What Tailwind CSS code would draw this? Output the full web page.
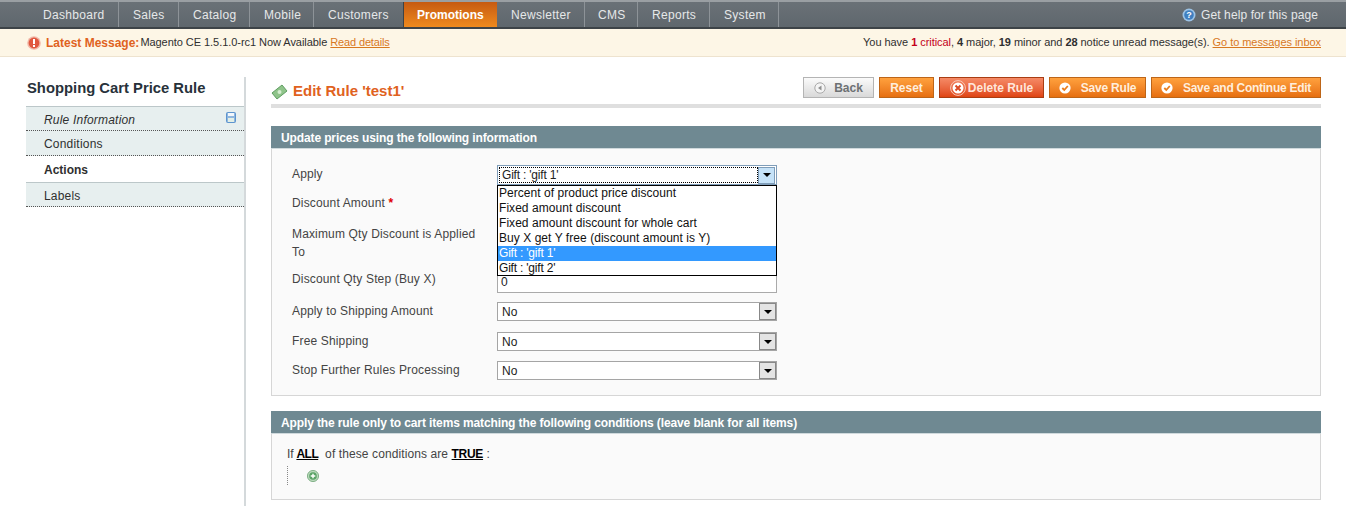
<!DOCTYPE html>
<html><head><meta charset="utf-8"><script src="https://cdn.jsdelivr.net/npm/@tailwindcss/browser@4"></script></head>
<body class="bg-white overflow-hidden">
<div class="w-[1346px] h-[506px] overflow-hidden font-['Liberation_Sans',Arial,sans-serif] text-[12px] text-[#2f2f2f]">
  <header class="h-[29px] bg-gradient-to-b from-[#6a7177] to-[#5f676d] border-t-2 border-t-[#9a9fa3] border-b-2 border-b-[#3d4347] flex items-stretch justify-between text-[12px] text-[#e6e8e9] tracking-[0.3px]">
    <nav class="flex pl-[26px]">
      <a class="w-[93px] pl-[17px] flex items-center border-r border-[#8d9398]">Dashboard</a>
      <a class="w-[60px] pl-[14px] flex items-center border-r border-[#8d9398]">Sales</a>
      <a class="w-[71px] pl-[14px] flex items-center border-r border-[#8d9398]">Catalog</a>
      <a class="w-[64px] pl-[14px] flex items-center border-r border-[#8d9398]">Mobile</a>
      <a class="w-[89px] pl-[14px] flex items-center">Customers</a>
      <a class="w-[94px] pl-[13px] flex items-center font-bold tracking-normal text-white bg-gradient-to-b from-[#c65a12] to-[#ee8a1e] border-l border-[#3d4347]">Promotions</a>
      <a class="w-[88px] pl-[14px] flex items-center border-r border-[#8d9398]">Newsletter</a>
      <a class="w-[53px] pl-[13px] flex items-center border-r border-[#8d9398]">CMS</a>
      <a class="w-[72px] pl-[14px] flex items-center border-r border-[#8d9398]">Reports</a>
      <a class="w-[69px] pl-[14px] flex items-center border-r border-[#8d9398]">System</a>
    </nav>
    <div class="flex items-center pr-[28px] gap-[5px] tracking-[0.1px]">
      <svg width="14" height="14" viewBox="0 0 14 14"><circle cx="7" cy="7" r="6.5" fill="#9cc3e6"/><circle cx="7" cy="7" r="4.8" fill="#3f7fc0"/><text x="7" y="10.2" text-anchor="middle" font-size="9" font-weight="700" fill="#fff" font-family="Liberation Sans">?</text></svg>
      <span>Get help for this page</span>
    </div>
  </header>

  <div class="h-[28px] bg-[#fdf6e6] border-b border-[#eee3cf] flex items-center justify-between pl-[27px] pr-[25px] text-[11px]">
    <div class="flex items-center">
      <svg class="mr-[5px]" width="14" height="14" viewBox="0 0 14 14"><circle cx="7" cy="7" r="6.8" fill="#f2b8a8"/><circle cx="7" cy="7" r="5.4" fill="#e0583f"/><rect x="6" y="3" width="2" height="5" fill="#fff"/><rect x="6" y="9" width="2" height="2" fill="#fff"/></svg>
      <b class="text-[#e0621e] text-[12px] mr-[1px]">Latest Message:</b>
      <span class="tracking-[-0.05px]">Magento CE 1.5.1.0-rc1 Now Available <a class="text-[#d8781f] underline tracking-[-0.15px]">Read details</a></span>
    </div>
    <div class="tracking-[-0.05px]">You have <b class="text-[#c4001a]">1</b> <span class="text-[#c4001a]">critical</span>, <b>4</b> major, <b>19</b> minor and <b>28</b> notice unread message(s). <a class="text-[#d8781f] underline">Go to messages inbox</a></div>
  </div>

  <div class="flex pl-[26px] pr-[25px] pt-[20px]">
    <aside class="w-[220px] h-[430px] shrink-0 border-r-[2px] border-[#d4d9db]">
      <h3 class="h-[29px] pl-[1px] pt-[2px] font-bold text-[14.8px] leading-[18px] text-[#27313a]">Shopping Cart Price Rule</h3>
      <ul class="text-[12px] text-[#2f2f2f] tracking-[0.2px]">
        <li class="h-[25px] pt-[3px] bg-[#e7efef] shadow-[inset_0_1px_0_#bcc7c9] border-b border-dotted border-[#555] pl-[18px] flex items-center justify-between pr-[8px] italic">
          <span>Rule Information</span>
          <svg class="mb-[5px]" width="10" height="11" viewBox="0 0 10 11"><rect x=".5" y=".5" width="9" height="10" rx="1" fill="#8fb6de" stroke="#5c94cf"/><rect x="2" y="1" width="6" height="3" fill="#f2f7fc"/><rect x="2" y="6" width="6" height="4" fill="#e3efe6"/></svg>
        </li>
        <li class="h-[25px] pt-[2px] bg-[#e7efef] border-b border-dotted border-[#555] pl-[18px] flex items-center">Conditions</li>
        <li class="h-[26px] pt-[1px] bg-white pl-[18px] flex items-center font-bold tracking-normal">Actions</li>
        <li class="h-[25px] pt-[3px] bg-[#e7efef] shadow-[inset_0_1px_0_#bcc7c9] border-b border-dotted border-[#555] pl-[18px] flex items-center">Labels</li>
      </ul>
    </aside>

    <main class="ml-[25px] w-[1050px]">
      <div class="h-[31px] border-b-[4px] border-[#dfdfdf] flex justify-between">
        <div class="flex items-center h-[27px]">
          <svg class="mr-[5px] mt-[2px]" width="17" height="16" viewBox="0 0 17 16"><path d="M1 9 L11 1 L16 7 L6 15 Z" fill="#8fc48a" stroke="#5f9d62" stroke-width="1"/><circle cx="8.5" cy="8" r="2" fill="#d5ecd0"/></svg>
          <h3 class="text-[15px] font-bold text-[#e0621e] mt-[2px]">Edit Rule 'test1'</h3>
        </div>
        <div class="flex gap-[5px] h-[22px] font-bold text-[12px] text-white whitespace-nowrap">
          <button class="w-[71px] h-[21px] border border-[#b4b4b4] bg-gradient-to-b from-[#fbfbfb] to-[#d9d9d9] text-[#6d7173] flex items-center justify-center gap-[8px]"><svg width="12" height="12" viewBox="0 0 12 12"><circle cx="6" cy="6" r="5.2" fill="#f4f4f4" stroke="#a9a9a9"/><path d="M7.5 3.5 L4 6 L7.5 8.5 Z" fill="#8f8f8f"/></svg>Back</button>
          <button class="w-[55px] h-[21px] border border-[#bd6518] bg-gradient-to-b from-[#ffa13d] to-[#e66f0f] flex items-center justify-center text-[#ffeedd]">Reset</button>
          <button class="w-[105px] h-[21px] border border-[#a93d13] bg-gradient-to-b from-[#f58a66] to-[#df4410] flex items-center justify-center gap-[2px] text-[#ffe6dc]"><svg width="16" height="16" viewBox="0 0 16 16"><circle cx="8" cy="8" r="7.4" fill="none" stroke="#f8c9b8"/><circle cx="8" cy="8" r="5.5" fill="#fff"/><path d="M5.5 5.5 L10.5 10.5 M10.5 5.5 L5.5 10.5" stroke="#db4a25" stroke-width="2"/></svg>Delete Rule</button>
          <button class="w-[97px] h-[21px] border border-[#bd6518] bg-gradient-to-b from-[#ffa13d] to-[#e66f0f] flex items-center justify-center gap-[10px] text-[#ffeedd] tracking-[-0.2px]"><svg width="12" height="12" viewBox="0 0 12 12"><circle cx="6" cy="6" r="5.6" fill="#fff"/><path d="M3.3 6 L5.3 8 L8.8 4" fill="none" stroke="#ea7d1c" stroke-width="1.8"/></svg>Save Rule</button>
          <button class="w-[170px] h-[21px] border border-[#bd6518] bg-gradient-to-b from-[#ffa13d] to-[#e66f0f] flex items-center justify-center gap-[10px] text-[#ffeedd] tracking-[-0.27px]"><svg width="12" height="12" viewBox="0 0 12 12"><circle cx="6" cy="6" r="5.6" fill="#fff"/><path d="M3.3 6 L5.3 8 L8.8 4" fill="none" stroke="#ea7d1c" stroke-width="1.8"/></svg>Save and Continue Edit</button>
        </div>
      </div>

      <section class="mt-[18px]">
        <h4 class="h-[23px] pt-[1px] bg-[#6f8992] border-b border-[#cfd9dc] pl-[10px] flex items-center font-bold text-white text-[12px] tracking-[-0.12px]">Update prices using the following information</h4>
        <div class="relative h-[247px] bg-[#fafafa] border border-t-0 border-[#d6d6d6] text-[12px] text-[#444] tracking-[0.15px]">
          <div class="grid grid-cols-[205px_280px] pl-[20px] pt-[17px]">
            <div class="h-[29px] leading-[17px]">Apply</div>
            <div></div>
            <div class="h-[30px] leading-[17px]">Discount Amount <span class="text-[#e00000] font-bold">*</span></div>
            <div></div>
            <div class="h-[46px] leading-[18px] w-[190px]">Maximum Qty Discount is Applied To</div>
            <div></div>
            <div class="h-[32px] leading-[17px]">Discount Qty Step (Buy X)</div>
            <div class="h-[19px] mt-[3px] bg-white border border-[#aaa] pl-[3px] text-[#222] leading-[15px]">0</div>
            <div class="h-[30px] leading-[17px]">Apply to Shipping Amount</div>
            <div class="h-[19px] -mt-[1px] bg-white border border-[#a5a5a5] pl-[4px] text-[#222] leading-[18px] flex justify-between">No<span class="w-[17px] h-[17px] bg-[#e4e4e4] border border-[#888] flex items-center justify-center"><span class="border-x-[4px] border-x-transparent border-t-[4px] border-t-black"></span></span></div>
            <div class="h-[29px] leading-[17px]">Free Shipping</div>
            <div class="h-[19px] bg-white -mt-[1px] border border-[#a5a5a5] pl-[4px] text-[#222] leading-[18px] flex justify-between">No<span class="w-[17px] h-[17px] bg-[#e4e4e4] border border-[#888] flex items-center justify-center"><span class="border-x-[4px] border-x-transparent border-t-[4px] border-t-black"></span></span></div>
            <div class="h-[30px] leading-[17px]">Stop Further Rules Processing</div>
            <div class="h-[19px] bg-white -mt-[1px] border border-[#a5a5a5] pl-[4px] text-[#222] leading-[18px] flex justify-between">No<span class="w-[17px] h-[17px] bg-[#e4e4e4] border border-[#888] flex items-center justify-center"><span class="border-x-[4px] border-x-transparent border-t-[4px] border-t-black"></span></span></div>
          </div>
          <div class="absolute left-[225px] top-[16px] w-[280px] h-[20px] bg-white border border-[#7f9db9] flex items-center justify-between p-[1px] text-[#222] tracking-[-0.2px]">
            <span class="flex-1 h-[16px] border border-dotted border-black pl-[2px] leading-[14px]">Gift : 'gift 1'</span>
            <span class="w-[17px] h-[17px] bg-[#c5e2f8] border border-[#7f9db9] flex items-center justify-center"><span class="border-x-[4px] border-x-transparent border-t-[4px] border-t-black"></span></span>
          </div>
          <ul class="absolute left-[225px] top-[36px] w-[280px] h-[91px] bg-white border border-black text-[#111] leading-[15px] tracking-[0.05px]">
            <li class="h-[15px] pl-[1px]">Percent of product price discount</li>
            <li class="h-[15px] pl-[1px]">Fixed amount discount</li>
            <li class="h-[15px] pl-[1px]">Fixed amount discount for whole cart</li>
            <li class="h-[15px] pl-[1px]">Buy X get Y free (discount amount is Y)</li>
            <li class="h-[15px] pl-[1px] bg-[#3399ff] text-white tracking-[-0.2px]">Gift : 'gift 1'</li>
            <li class="h-[15px] pl-[1px] tracking-[-0.2px]">Gift : 'gift 2'</li>
          </ul>
        </div>
      </section>

      <section class="mt-[15px]">
        <h4 class="h-[23px] pt-[1px] bg-[#6f8992] border-b border-[#cfd9dc] pl-[10px] flex items-center font-bold text-white text-[12px] tracking-[-0.12px]">Apply the rule only to cart items matching the following conditions (leave blank for all items)</h4>
        <div class="h-[66px] bg-[#fafafa] border border-t-0 border-[#d6d6d6] pl-[15px] pt-[13px] text-[#444]">
          <div class="leading-[15px] tracking-[0.1px]"><span class="tracking-[-0.2px]">If </span><b class="underline text-black tracking-[-0.5px]">ALL</b>&nbsp; of these conditions are <b class="underline text-black tracking-[-0.3px]">TRUE</b> :</div>
          <div class="mt-[4px] h-[19px] border-l border-dotted border-[#888] pl-[19px] flex items-center">
            <svg width="12" height="12" viewBox="0 0 12 12"><circle cx="6" cy="6" r="5.6" fill="#b9d8bb" stroke="#6fa576" stroke-width=".8"/><circle cx="6" cy="6" r="3.8" fill="#5aa367"/><path d="M6 3.7 V8.3 M3.7 6 H8.3" stroke="#fff" stroke-width="1.4"/></svg>
          </div>
        </div>
      </section>
    </main>
  </div>
</div>
</body></html>
